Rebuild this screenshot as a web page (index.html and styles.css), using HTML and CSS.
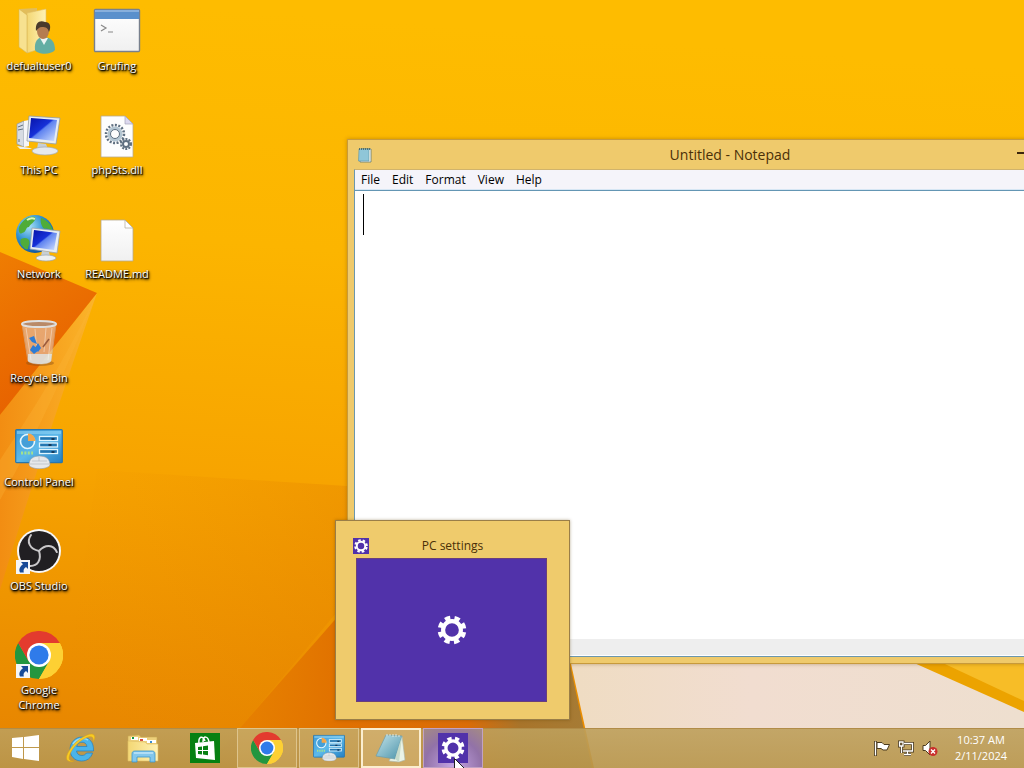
FILE: index.html
```
<!DOCTYPE html>
<html lang="en">
<head>
	<meta charset="utf-8">
	<meta name="viewport" content="width=device-width,initial-scale=1.0">
	<title>Desktop</title>
	<link rel="stylesheet" href="styles.css">
</head>

<body>
	<!-- shared icons -->
	<svg class="defs" width="0" height="0" aria-hidden="true">
		<defs>
			<linearGradient id="screen" x1="0" y1="0" x2="1" y2="1">
				<stop offset="0" stop-color="#0713a8"/><stop offset=".45" stop-color="#1630d8"/><stop offset=".5" stop-color="#5f83f0"/><stop offset="1" stop-color="#d3e2ff"/>
			</linearGradient>
			<linearGradient id="folder" x1="0" x2="1">
				<stop offset="0" stop-color="#f3d774"/><stop offset="1" stop-color="#fff2b5"/>
			</linearGradient>
			<linearGradient id="paper" x1="0" y1="0" x2="0" y2="1">
				<stop offset="0" stop-color="#fff"/><stop offset="1" stop-color="#f0f0f0"/>
			</linearGradient>
			<linearGradient id="panel" x1="0" y1="0" x2="1" y2="1">
				<stop offset="0" stop-color="#3c9bd8"/><stop offset=".5" stop-color="#5db9ea"/><stop offset="1" stop-color="#247fc2"/>
			</linearGradient>
			<linearGradient id="note" x1="0" y1="0" x2="1" y2="1">
				<stop offset="0" stop-color="#c4e4ea"/><stop offset="1" stop-color="#4b93aa"/>
			</linearGradient>
			<radialGradient id="globe" cx=".35" cy=".3" r=".8">
				<stop offset="0" stop-color="#a6e0f7"/><stop offset=".5" stop-color="#2d8fd0"/><stop offset="1" stop-color="#0c4a94"/>
			</radialGradient>
			<symbol id="i-gear" viewBox="0 0 32 32">
				<circle cx="16" cy="16" r="9.5" fill="none" stroke="#fff" stroke-width="4.4"/>
				<circle cx="16" cy="16" r="13" fill="none" stroke="#fff" stroke-width="4.6" stroke-dasharray="5.7 4.51" transform="rotate(10 16 16)"/>
			</symbol>
			<symbol id="i-chrome" viewBox="0 0 48 48">
				<path d="M24 24L3.2 12A24 24 0 0 1 44.8 12Z" fill="#e33b2e"/>
				<path d="M24 24V12H44.8A24 24 0 0 1 24 48Z" fill="#fdd033"/>
				<path d="M24 24L34.4 30L24 48A24 24 0 0 1 3.2 12L13.6 30Z" fill="#23963f"/>
				<path d="M3.2 12L13.6 30L24 24V12Z" fill="#e33b2e"/>
				<path d="M34.4 30L24 48A24 24 0 0 0 44.8 12H24Z" fill="#fdd033"/>
				<circle cx="24" cy="24" r="12" fill="#fff"/>
				<circle cx="24" cy="24" r="9.6" fill="#2f7bea"/>
			</symbol>
			<symbol id="i-panel" viewBox="0 0 48 40">
				<rect x=".7" y=".7" width="46.6" height="33" rx="1" fill="url(#panel)" stroke="#2876ad" stroke-width="1.2"/>
				<path d="M2 2H46V5H2Z" fill="#8fd2f4" opacity=".6"/>
				<circle cx="12.5" cy="12.5" r="7" fill="#459fd8" stroke="#e5f7ff" stroke-width="1.6"/>
				<path d="M13 12V4.500A7.500 7.500 0 0 1 20.500 12Z" fill="#f3a649"/>
				<path d="M6 24H18" stroke="#a3e28d" stroke-width="3" stroke-dasharray="2 1.400"/>
				<g fill="#2377b2" stroke="#e0f6ff" stroke-width="1.3">
					<rect x="24.500" y="7.500" width="18" height="4"/><rect x="24.500" y="14" width="18" height="4"/><rect x="24.500" y="20.500" width="18" height="4"/>
				</g>
				<path d="M38 9V11M35 15V17M38 22V24" stroke="#143b5e" stroke-width="3"/>
				<path d="M14 36C14 30 18 27 24.500 27S35 30 35 36C33 41 16 41 14 36Z" fill="#e6e8ea" stroke="#8d99a2" stroke-width=".6"/>
				<path d="M17 32H32M15 35H34M24 28V32" stroke="#b4bac0" stroke-width=".7"/>
			</symbol>
			<symbol id="i-arrow" viewBox="0 0 14 14">
				<rect width="14" height="14" fill="#f4f6f8"/>
				<path d="M5 2H12V9L10 7C7.500 8.500 7.300 10 7.800 12.500H4C2.500 9.500 4 6.500 7 4.300Z" fill="#174a97"/>
			</symbol>
		</defs>
	</svg>

	<svg class="wallpaper" viewBox="0 0 1024 768" preserveAspectRatio="none" aria-hidden="true">
		<defs>
			<linearGradient id="sky" x1="0.100" y1="0" x2="0" y2="1">
				<stop offset="0" stop-color="#febc00"/><stop offset=".3" stop-color="#fcb500"/><stop offset=".6" stop-color="#f7a400"/><stop offset=".8" stop-color="#ee9300"/><stop offset="1" stop-color="#e68200"/>
			</linearGradient>
			<linearGradient id="facet" x1="0" y1="0" x2=".4" y2="1">
				<stop offset="0" stop-color="#ef7d02"/><stop offset="1" stop-color="#e65f00"/>
			</linearGradient>
			<linearGradient id="streak" x1="0" y1="0" x2="1" y2="0">
				<stop offset="0" stop-color="#f28d12"/><stop offset="1" stop-color="#fbb52a"/>
			</linearGradient>
			<linearGradient id="cream">
				<stop offset="0" stop-color="#efdcc2"/><stop offset=".4" stop-color="#f1ddd0"/><stop offset="1" stop-color="#eedfcf"/>
			</linearGradient>
			<linearGradient id="shade" x1="0" x2="1">
				<stop offset="0" stop-color="#e98a00" stop-opacity="0"/><stop offset="1" stop-color="#e07c00" stop-opacity=".3"/>
			</linearGradient>
			<linearGradient id="fold" gradientUnits="userSpaceOnUse" x1="240" y1="0" x2="590" y2="0">
				<stop offset="0" stop-color="#e37600" stop-opacity=".5"/><stop offset=".3" stop-color="#e07000"/><stop offset=".65" stop-color="#da6c08"/><stop offset=".8" stop-color="#a8742a"/><stop offset="1" stop-color="#a67c36"/>
			</linearGradient>
		</defs>
		<rect width="1024" height="768" fill="url(#sky)"/>
		<path d="M97 293C60 400 30 490 0 590V415Z" fill="url(#streak)"/>
		<path d="M97 293C70 360 40 430 0 500V460C40 400 70 350 97 293Z" fill="#fbb637" opacity=".3"/>
		<path d="M0 252L97 293L0 415Z" fill="url(#facet)"/>
		<path d="M97 470L347 486V600L240 728H60Z" fill="url(#shade)"/>
		<path d="M347 606L205 768H592L568 655Z" fill="url(#fold)"/>
		<path d="M568 650L594 768H1024V650Z" fill="url(#cream)"/>
		<path d="M885 650L1024 712V650Z" fill="#eca300"/>
		<path d="M915 650L1024 701V650Z" fill="#f7bd27"/>
	</svg>

	<main class="desktop">
		<ul class="shortcuts">
			<li><button class="shortcut" type="button">
				<svg class="icon" viewBox="0 0 48 48" aria-hidden="true">
					<path d="M4 2L22 1V41L12 46L4 40Z" fill="#e2bd5b"/>
					<path d="M12 6L31 2V40L12 46Z" fill="url(#folder)" stroke="#dfbd66" stroke-width=".6"/>
					<path d="M4 2L12 8V46L4 40Z" fill="#f7e190" stroke="#d9b550" stroke-width=".6"/>
					<path d="M20 43C19 34 23 30 29 30C36 30 40 35 40 43C36 48 23 48 20 43Z" fill="#63aea3"/>
					<path d="M25 31L29 38L33 31Z" fill="#eef5f2"/>
					<ellipse cx="28" cy="24" rx="6" ry="8" fill="#b57d50"/>
					<path d="M21 24C20 15 25 13 30 15C36 15 36 21 34 25C33 21 31 20 27 20C24 20 23 22 21 24Z" fill="#493a2c"/>
				</svg>
				<span>defualtuser0</span></button></li>
			<li><button class="shortcut" type="button">
				<svg class="icon" viewBox="0 0 48 48" aria-hidden="true">
					<path d="M2 13L9 10V36L2 33Z" fill="#d7dce3" stroke="#8e98a4" stroke-width=".7"/>
					<path d="M9 10L14 9V35L9 36Z" fill="#f5f6f8"/>
					<path d="M3 16L8 14M3 19L8 18M4 28V31" stroke="#65727f"/>
					<path d="M14 5L45 7L41 33L12 30Z" fill="#e8edf2" stroke="#939da7" stroke-width=".8"/>
					<path d="M16 7L42 9L39 30L14 27Z" fill="url(#screen)"/>
					<path d="M23 32L31 33L33 38H22Z" fill="#c7ced5"/>
					<ellipse cx="30" cy="40" rx="13" ry="4" fill="#e6e9ec" stroke="#a1a8ae" stroke-width=".7"/>
					<path d="M2 35L15 37L17 38L5 38Z" fill="#eceff2"/>
				</svg>
				<span>This PC</span></button></li>
			<li><button class="shortcut" type="button">
				<svg class="icon" viewBox="0 0 48 48" aria-hidden="true">
					<circle cx="20" cy="19" r="19" fill="url(#globe)"/>
					<path d="M4 12C8 4 14 1 20 2C22 6 16 8 14 12C10 12 12 17 7 18C5 20 3 16 4 12ZM6 24C12 21 16 25 14 30C12 33 15 35 10 34C7 31 4 28 6 24ZM26 3C33 5 37 11 38 16C34 14 32 13 29 14C26 10 25 7 26 3Z" fill="#4fac39"/>
					<path d="M12 5C15 3 18 3 20 4" stroke="#dcf5bb" stroke-width="2" fill="none"/>
					<path d="M17 13L45 16L42 38L15 34Z" fill="#e8edf2" stroke="#9aa3af" stroke-width=".8"/>
					<path d="M19 15L42 18L39 35L17 32Z" fill="url(#screen)"/>
					<path d="M27 36L34 37L35 41H26Z" fill="#c8cfd5"/>
					<ellipse cx="31" cy="43" rx="10" ry="3" fill="#eceff1" stroke="#9da5ac" stroke-width=".7"/>
				</svg>
				<span>Network</span></button></li>
			<li><button class="shortcut" type="button">
				<svg class="icon" viewBox="0 0 48 48" aria-hidden="true">
					<ellipse cx="25" cy="44" rx="14" ry="3" fill="#8c4f14" opacity=".45"/>
					<path d="M7 5H41L36 42C34 46 16 46 13 42Z" fill="#e7e0da" opacity=".5" stroke="#c9c5c2" stroke-width="1"/>
					<path d="M13 35H37L36 42C34 46 16 46 13 42Z" fill="#dfe6e8" opacity=".8"/>
					<path d="M11 9L16 41M37 9L33 41M20 10L22 33M31 9L29 33" stroke="#fff" opacity=".4"/>
					<path d="M14 19L19 17L22 25L17 23ZM18 26L24 31L19 35L15 31ZM20 29L23 24L26 29L23 33Z" fill="#2f7cd4"/>
					<path d="M28 28L34 20" stroke="#9a5a3c" stroke-width="1.500"/>
					<ellipse cx="24" cy="5" rx="17" ry="3" fill="#b98a68" stroke="#dfe0e0" stroke-width="2"/>
				</svg>
				<span>Recycle Bin</span></button></li>
			<li><button class="shortcut" type="button">
				<svg class="icon" viewBox="0 -6 48 48" aria-hidden="true"><use href="#i-panel" width="48" height="40"/></svg>
				<span>Control Panel</span></button></li>
			<li><button class="shortcut" type="button">
				<svg class="icon" viewBox="0 0 48 48" aria-hidden="true">
					<circle cx="24" cy="24" r="22" fill="#f7f7f7"/>
					<circle cx="24" cy="24" r="20" fill="#211f22"/>
					<g fill="none" stroke="#c9c7c9" stroke-width="2" stroke-linecap="round">
						<path id="blade" d="M24 24C15 22 11 15 16 8"/>
						<use href="#blade" transform="rotate(120 24 24)"/>
						<use href="#blade" transform="rotate(240 24 24)"/>
					</g>
					<use href="#i-arrow" x="1" y="33" width="14" height="14"/>
				</svg>
				<span>OBS Studio</span></button></li>
			<li><button class="shortcut" type="button">
				<svg class="icon" viewBox="0 0 48 48" aria-hidden="true">
					<use href="#i-chrome" width="48" height="48"/>
					<use href="#i-arrow" x="1" y="33" width="14" height="14"/>
				</svg>
				<span>Google Chrome</span></button></li>
			<li><button class="shortcut" type="button">
				<svg class="icon" viewBox="0 0 48 48" aria-hidden="true">
					<rect x="1.500" y="2.500" width="45" height="42" rx="1" fill="url(#paper)" stroke="#78808d" stroke-width="1.400"/>
					<path d="M2 3H46V12H2Z" fill="#5a90cc"/>
					<path d="M2 3H46V5H2Z" fill="#87afdc"/>
					<path d="M8 18L13 21L8 24M15 25H20" fill="none" stroke="#888" stroke-width="1.200"/>
				</svg>
				<span>Grufing</span></button></li>
			<li><button class="shortcut" type="button">
				<svg class="icon" viewBox="0 0 48 48" aria-hidden="true">
					<path d="M8 5H32L40 13V46H8Z" fill="#fdfdfd" stroke="#b9a98c" stroke-width=".8"/>
					<path d="M32 5V13H40Z" fill="#dcd8ee" stroke="#a5a3b8" stroke-width=".7"/>
					<g fill="none" stroke="#5f6f80">
						<circle cx="22" cy="23" r="6" stroke-width="3" stroke="#b4c6d2"/>
						<circle cx="22" cy="23" r="9" stroke-width="2.500" stroke-dasharray="2 1.500"/>
						<circle cx="22" cy="23" r="4.500"/>
						<circle cx="33" cy="33" r="3" stroke-width="2"/>
						<circle cx="33" cy="33" r="5" stroke-width="2" stroke-dasharray="2 1.200"/>
					</g>
				</svg>
				<span>php5ts.dll</span></button></li>
			<li><button class="shortcut" type="button">
				<svg class="icon" viewBox="0 0 48 48" aria-hidden="true">
					<path d="M8 5H32L40 13V46H8Z" fill="url(#paper)" stroke="#b9a98c" stroke-width=".8"/>
					<path d="M32 5V13H40Z" fill="#fff" stroke="#b0a795" stroke-width=".7"/>
				</svg>
				<span>README.md</span></button></li>
		</ul>

		<section class="window" aria-label="Notepad">
			<header class="titlebar">
				<svg class="small-icon" viewBox="0 0 16 16" aria-hidden="true">
					<path d="M4 2H14V15H3Z" fill="#fbfbf2" stroke="#4f6f71" stroke-width=".7"/>
					<path d="M2 2H12V14H1.500Z" fill="#8fc6d8" stroke="#5b94a5" stroke-width=".6"/>
					<path d="M2.500 1V3M4.500 1V3M6.500 1V3M8.500 1V3M10.500 1V3M12.500 1V3" stroke="#3e6167" stroke-width=".8"/>
				</svg>
				<h1>Untitled - Notepad</h1>
				<div class="controls">
					<button type="button" aria-label="Minimize"><svg viewBox="0 0 10 10"><path d="M1 5H9" stroke="#3b250d" stroke-width="2"/></svg></button>
					<button type="button" aria-label="Maximize"><svg viewBox="0 0 10 10"><path d="M1 2H9V9H1Z" fill="none" stroke="#3b250d"/></svg></button>
					<button class="close" type="button" aria-label="Close"><svg viewBox="0 0 10 10"><path d="M1 1L9 9M9 1L1 9" stroke="#fff" stroke-width="2"/></svg></button>
				</div>
			</header>
			<div class="client">
				<nav class="menubar">
					<button type="button">File</button>
					<button type="button">Edit</button>
					<button type="button">Format</button>
					<button type="button">View</button>
					<button type="button">Help</button>
				</nav>
				<div class="editor">
					<textarea aria-label="Document text" spellcheck="false"></textarea>
					<span class="caret"></span>
				</div>
				<div class="scrollbar"></div>
			</div>
		</section>
	</main>

	<footer class="taskbar">
		<button class="start" type="button" aria-label="Start">
			<svg width="28" height="28" viewBox="0 0 28 28"><path d="M1 4L12 3V13H1ZM13 3L28 1V13H13ZM1 14H12V25L1 23ZM13 14H28V27L13 25Z" fill="#fff"/></svg>
		</button>
		<button class="task" type="button" aria-label="Internet Explorer">
			<svg width="32" height="32" viewBox="0 0 32 32">
				<path d="M27.500 21C26 26 22 29 16.500 29C9.500 29 5 24 5 17.500S10 5 17 5S29 10 28.500 19H11.500C12 22 14 23.500 17 23.500C19 23.500 20.500 22.500 21.500 21ZM11.700 14.500H22C21.500 11.500 19.500 10.200 17 10.200S12.300 11.500 11.700 14.500Z" fill="#4bb4ea" stroke="#2380c2" stroke-width=".7"/>
				<path d="M8 12C11 7 18 5 23 8" stroke="#93dcfa" stroke-width="1.500" fill="none"/>
				<path d="M9 29C2 31 -1 27 4 19C9 10 20 2 27 2C31 3 30 7 28 10C29 5 27 4 23 5C15 8 8 15 5 22C3 27 4 29 9 29Z" fill="#f8cc23" stroke="#d89f18" stroke-width=".5"/>
			</svg>
		</button>
		<button class="task" type="button" aria-label="File Explorer">
			<svg width="32" height="32" viewBox="0 0 32 32">
				<path d="M1 4L12 3L14 5H30V28H1Z" fill="#edd07b" stroke="#c9a750" stroke-width=".6"/>
				<path d="M4 5H11V8H4ZM12 6H20V9H12ZM20 8H29V11H20Z" fill="#fff"/>
				<path d="M5 5H7V7H5Z" fill="#159442"/><path d="M13 7H16V9H13Z" fill="#d65040"/><path d="M23 9H25V11H23Z" fill="#3b8dce"/>
				<path d="M1 9L18 10L20 12H31V29H1Z" fill="url(#folder)" stroke="#dfbd66" stroke-width=".6"/>
				<path d="M5 30V22C5 20 6 19 8 19H25C27 19 28 20 28 22V30H23V25H10V30Z" fill="#83c7ec" stroke="#3b95cb" stroke-width=".8"/>
				<path d="M7 21H26" stroke="#dff4ff"/>
			</svg>
		</button>
		<button class="task" type="button" aria-label="Store">
			<svg width="30" height="30" viewBox="0 0 30 30">
				<rect width="30" height="30" fill="#078012"/>
				<path d="M5 10L24 8L25 27L6 25Z" fill="#fff"/>
				<path d="M9 11C8 3 13 2 15 8M13 9C13 2 18 3 19 9" fill="none" stroke="#fff" stroke-width="1.500"/>
				<path d="M8 14L12 13.500V17H8ZM13 13.300L18 12.600V17H13ZM8 18H12V21.500L8 21ZM13 18H18V22.200L13 21.600Z" fill="#078012"/>
			</svg>
		</button>
		<button class="task open" type="button" aria-label="Google Chrome">
			<svg width="32" height="32" viewBox="0 0 48 48"><use href="#i-chrome"/></svg>
		</button>
		<button class="task open" type="button" aria-label="Control Panel">
			<svg width="32" height="28" viewBox="0 0 48 40"><use href="#i-panel"/></svg>
		</button>
		<button class="task open focused" type="button" aria-label="Notepad">
			<svg width="32" height="32" viewBox="0 0 32 32">
				<path d="M27 4L30 28L24 30L14 29Z" fill="#eaf3e7" stroke="#a7b7ad" stroke-width=".6"/>
				<path d="M11 3L27 4L20 27L1 24Z" fill="url(#note)" stroke="#6d9ca7" stroke-width=".7"/>
				<path d="M27 4L24 30L20 27Z" fill="#c8dccb"/>
				<path d="M12 2V4M15 2V4M18 2V5M21 2V5M24 3V5" stroke="#dce9e5"/>
			</svg>
		</button>
		<button class="task open hovered" type="button" aria-label="PC settings">
			<svg class="tile" width="30" height="30" viewBox="-4 -4 40 40"><use href="#i-gear" width="32" height="32"/></svg>
		</button>

		<div class="tray">
			<button type="button" aria-label="Action Center">
				<svg width="16" height="16" viewBox="0 0 16 16"><path d="M1.500 1V16" stroke="#4b3a1e" stroke-width="3"/><path d="M3 2.500H8L10 4.500H15.500L13 10H9L7 8.500H3Z" fill="#fff" stroke="#4b3a1e"/><path d="M1.500 1.500V15.500" stroke="#fff" stroke-width="1.300"/></svg>
			</button>
			<button type="button" aria-label="Network">
				<svg width="16" height="16" viewBox="0 0 16 16"><g fill="none" stroke="#4b3a1e" stroke-width="3"><path d="M6 3.500H14.500V11H5M9.500 11V14M6 14.500H13M1.500 2H5V6H1.500ZM3.500 6V13"/></g><g fill="none" stroke="#fff" stroke-width="1.300"><path d="M6 3.500H14.500V11H5M9.500 11V14M6 14.500H13M1.500 2H5V6H1.500ZM3.500 6V13"/></g></svg>
			</button>
			<button type="button" aria-label="Volume muted">
				<svg width="16" height="16" viewBox="0 0 16 16"><path d="M1 5.500H3.500L8 1V15L3.500 10.500H1Z" fill="#fff" stroke="#4b3a1e"/><circle cx="11" cy="11.500" r="4.500" fill="#c9302c"/><path d="M9 9.500L13 13.500M13 9.500L9 13.500" stroke="#fff" stroke-width="1.400"/></svg>
			</button>
			<button class="clock" type="button"><time datetime="10:37">10:37 AM</time><time datetime="2024-02-11">2/11/2024</time></button>
		</div>

		<div class="preview">
			<div class="preview-head">
				<svg class="small-icon tile" viewBox="-2 -2 36 36" aria-hidden="true"><use href="#i-gear" width="32" height="32"/></svg>
				<span>PC settings</span>
			</div>
			<div class="thumbnail">
				<svg width="30" height="30" viewBox="0 0 32 32" aria-hidden="true"><use href="#i-gear"/></svg>
			</div>
		</div>

		<svg class="pointer" width="12" height="19" viewBox="0 0 12 19" aria-hidden="true"><path d="M.5 .5V16L4 12.500L6.500 18L9 17L6.500 11.500H11.500Z" fill="#fff" stroke="#222"/></svg>
	</footer>
</body>

</html>
```
FILE: styles.css
```
* {
	box-sizing: border-box;
}
html, body {
	height: 100%;
	margin: 0;
	padding: 0;
}
body {
	display: flex;
	flex-direction: column;
	overflow: hidden;
	font-family: "Open Sans", "Noto Sans", sans-serif;
	font-size: 12px;
	line-height: 16px;
	color: #000;
	background: #f7a400;
}
button {
	margin: 0;
	padding: 0;
	border: 0;
	background: none;
	font: inherit;
	color: inherit;
}
svg {
	display: block;
}
.defs {
	position: absolute;
}

/* desktop */
.wallpaper {
	position: absolute;
	top: 0;
	left: 0;
	z-index: -1;
	width: 100%;
	height: 100%;
}
.desktop {
	position: relative;
	flex: 1;
	min-height: 0;
	overflow: hidden;
}
.shortcuts {
	display: grid;
	grid-auto-flow: column;
	grid-template-rows: repeat(7, 104px);
	grid-auto-columns: 78px;
	width: 156px;
	margin: 0;
	padding: 0;
	list-style: none;
}
.shortcut {
	display: flex;
	flex-direction: column;
	align-items: center;
	gap: 3px;
	width: 100%;
	padding-top: 7px;
	color: #fff;
	font-size: 11px;
	line-height: 15px;
	text-shadow: 1px 1px 1px #000, 0 1px 2px #000, 1px 2px 3px #000;
}
.icon {
	width: 48px;
	height: 48px;
}

/* notepad */
.window {
	position: absolute;
	top: 139px;
	right: -89px;
	bottom: 64px;
	left: 347px;
	display: flex;
	flex-direction: column;
	padding: 0 6px 6px;
	background: #efca6c;
	border: 1px solid #c79a3c;
	box-shadow: 0 0 4px rgba(110, 70, 0, .4);
}
.titlebar {
	display: grid;
	grid-template-columns: 98px 1fr 98px;
	align-items: center;
	height: 29px;
}
.titlebar h1 {
	margin: 0;
	font-size: 14px;
	font-weight: normal;
	color: #4a3008;
	text-align: center;
}
.small-icon {
	width: 16px;
	height: 16px;
}
.titlebar .small-icon {
	margin-left: 3px;
}
.controls {
	display: flex;
	align-self: start;
}
.controls button {
	display: grid;
	place-items: center;
	width: 26px;
	height: 26px;
}
.controls svg {
	width: 10px;
	height: 10px;
}
.controls .close {
	width: 46px;
	background: #c75050;
}
.client {
	display: flex;
	flex: 1;
	flex-direction: column;
	min-height: 0;
	background: #fff;
	border: 1px solid #6c97ad;
	border-top-color: #d0b36c;
}
.menubar {
	display: flex;
	height: 20px;
	background: #f5f4fa;
	border-bottom: 1px solid #d6e6f4;
}
.menubar button {
	padding: 0 6px;
}
.editor {
	position: relative;
	flex: 1;
	border-top: 1px solid #6496b4;
}
.editor textarea {
	display: block;
	width: 100%;
	height: 100%;
	padding: 2px 8px;
	border: 0;
	outline: 0;
	resize: none;
	font-size: 32px;
	background: #fff;
}
.caret {
	position: absolute;
	top: 3px;
	left: 8px;
	width: 1px;
	height: 41px;
	background: #000;
}
.scrollbar {
	height: 17px;
	background: #eee;
	border-bottom: 1px solid #fff;
}

/* taskbar */
.taskbar {
	position: relative;
	display: flex;
	gap: 2px;
	height: 40px;
	background: linear-gradient(rgba(190, 160, 92, .9), rgba(184, 150, 76, .9));
	box-shadow: inset 0 1px #b18c48;
}
.start {
	display: grid;
	place-items: center;
	width: 49px;
}
.task {
	display: grid;
	place-items: center;
	width: 60px;
}
.task.open {
	background: rgba(222, 190, 120, .25);
	border: 1px solid #dec48c;
}
.task.focused {
	background: rgba(245, 220, 165, .3);
	border: 2px solid #fbeed0;
}
.task.hovered {
	background: radial-gradient(circle at 50% 100%, #c4a5e4, #9272a8 60%, #a48a84);
	border-color: #c1a2c4;
}
.tile {
	background: #5132aa;
}
.tray {
	display: flex;
	align-items: center;
	gap: 8px;
	margin-left: auto;
	padding-right: 16px;
}
.tray .clock {
	display: flex;
	flex-direction: column;
	align-items: center;
	min-width: 54px;
	margin-left: 8px;
	color: #fff;
	font-size: 11px;
}

/* thumbnail over the hovered button */
.preview {
	position: absolute;
	bottom: 48px;
	left: 335px;
	width: 235px;
	padding: 17px;
	background: #efcb6c;
	border: 1px solid #9a7e48;
	box-shadow: 0 0 3px rgba(90, 60, 0, .4);
}
.preview-head {
	display: grid;
	grid-template-columns: 16px 1fr 16px;
	align-items: center;
	margin-bottom: 4px;
	color: #4a3008;
	text-align: center;
}
.thumbnail {
	display: grid;
	place-items: center;
	height: 144px;
	margin: 0 5px 0 3px;
	background: #5132aa;
	border: 1px solid #6a3f7c;
}
.pointer {
	position: absolute;
	top: 30px;
	left: 454px;
}
```
